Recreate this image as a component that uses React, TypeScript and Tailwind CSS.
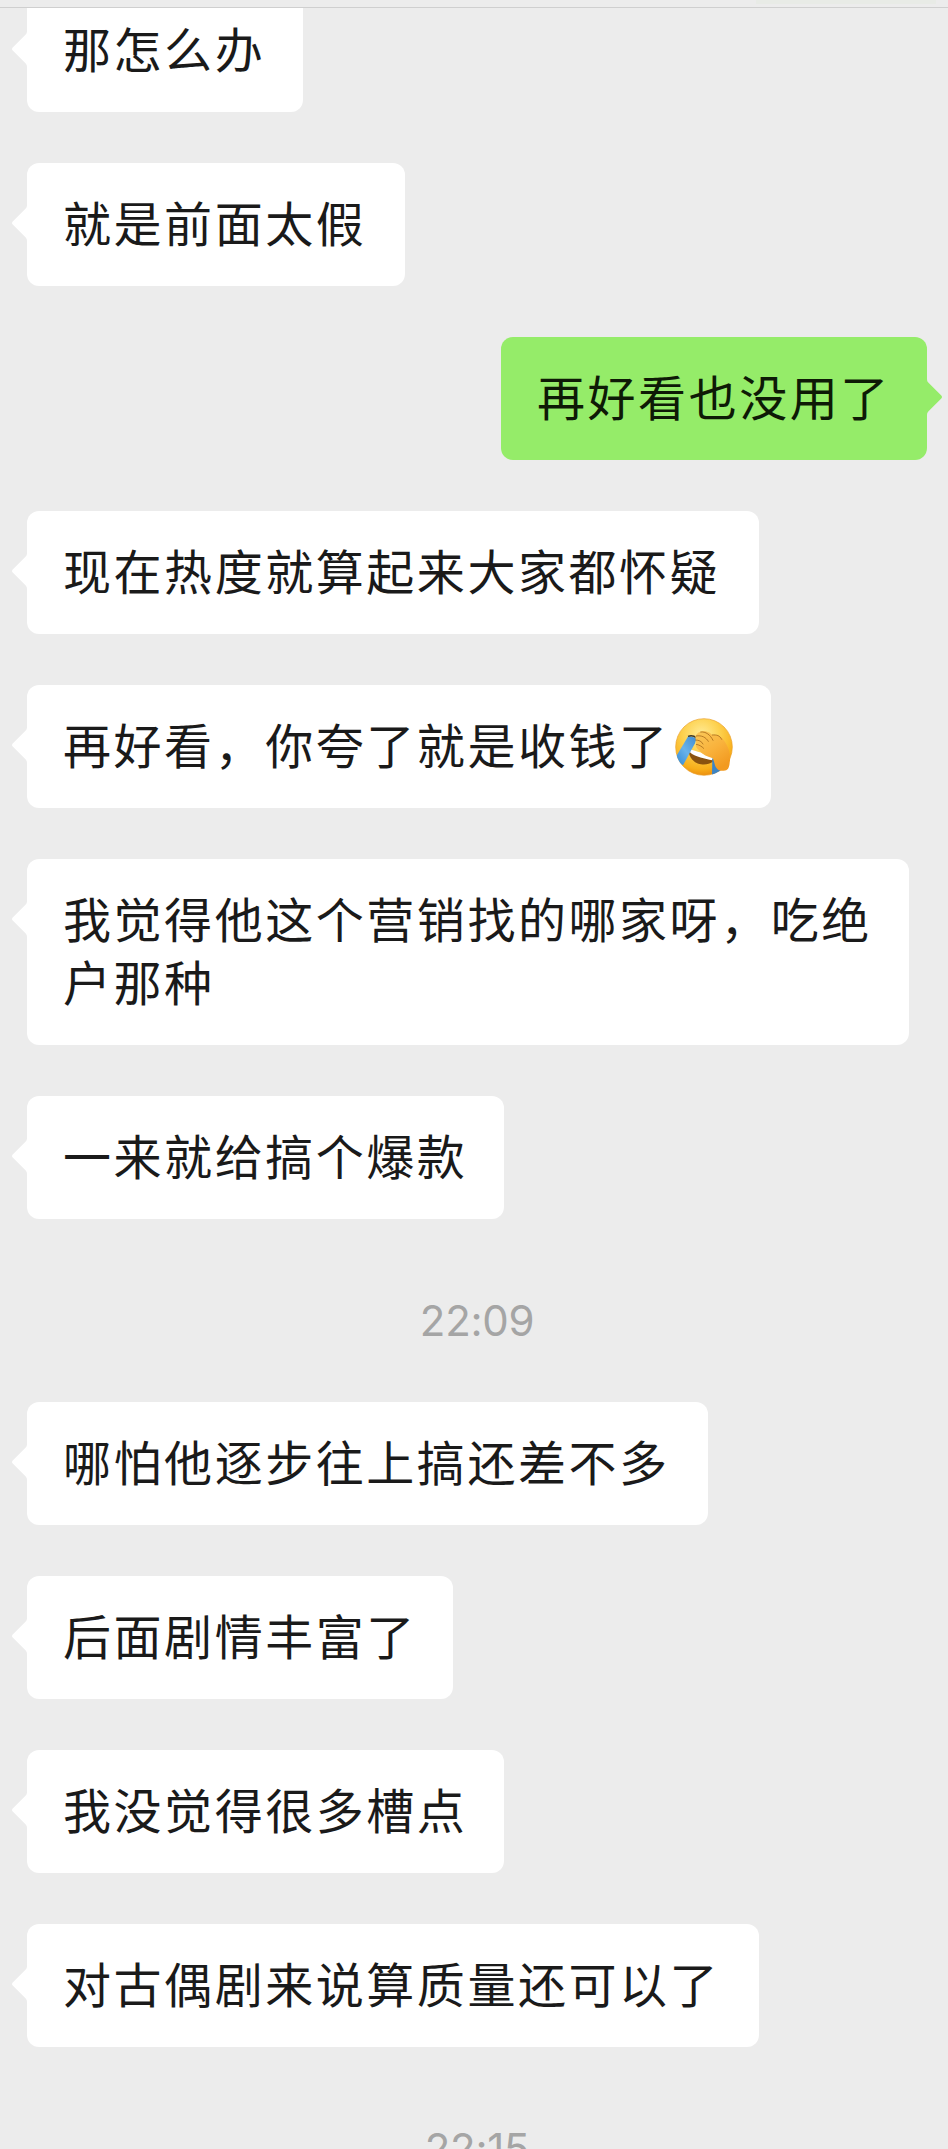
import React from 'react';
import clsx from 'clsx';

interface Message {
  id: number;
  kind: 'in' | 'out' | 'time';
  lines: string[];
  emoji?: boolean;
  width?: string;
}

const MESSAGES: Message[] = [
  { id: 1, kind: 'in', lines: ['那怎么办'], width: 'w-[276px]' },
  { id: 2, kind: 'in', lines: ['就是前面太假'], width: 'w-[378px]' },
  { id: 3, kind: 'out', lines: ['再好看也没用了'], width: 'w-[426px]' },
  { id: 4, kind: 'in', lines: ['现在热度就算起来大家都怀疑'], width: 'w-[732px]' },
  { id: 5, kind: 'in', lines: ['再好看，你夸了就是收钱了'], emoji: true, width: 'w-[744px]' },
  { id: 6, kind: 'in', lines: ['我觉得他这个营销找的哪家呀，吃绝', '户那种'], width: 'w-[882px]' },
  { id: 7, kind: 'in', lines: ['一来就给搞个爆款'], width: 'w-[477px]' },
  { id: 8, kind: 'time', lines: ['22:09'] },
  { id: 9, kind: 'in', lines: ['哪怕他逐步往上搞还差不多'], width: 'w-[681px]' },
  { id: 10, kind: 'in', lines: ['后面剧情丰富了'], width: 'w-[426px]' },
  { id: 11, kind: 'in', lines: ['我没觉得很多槽点'], width: 'w-[477px]' },
  { id: 12, kind: 'in', lines: ['对古偶剧来说算质量还可以了'], width: 'w-[732px]' },
  { id: 13, kind: 'time', lines: ['22:15'] },
];

const FacepalmEmoji = () => (
  <svg className="w-[60px] h-[60px] ml-[4px] shrink-0" viewBox="41 49 180 180">
    <defs>
      <radialGradient id="face" cx="0.45" cy="0.28" r="0.72">
        <stop offset="0" stopColor="#ffeb96" />
        <stop offset="0.45" stopColor="#fdd14e" />
        <stop offset="0.85" stopColor="#f8ae1a" />
        <stop offset="1" stopColor="#ec9010" />
      </radialGradient>
      <linearGradient id="hand" x1="0" y1="0" x2="0.6" y2="1">
        <stop offset="0" stopColor="#fac95a" />
        <stop offset="0.55" stopColor="#f9b23c" />
        <stop offset="1" stopColor="#f29a20" />
      </linearGradient>
      <linearGradient id="tear" x1="1" y1="0" x2="0" y2="1">
        <stop offset="0" stopColor="#3f8bd0" />
        <stop offset="0.5" stopColor="#69b2ea" />
        <stop offset="1" stopColor="#2d84d2" />
      </linearGradient>
      <clipPath id="faceClip">
        <circle cx="131" cy="139" r="86" />
      </clipPath>
    </defs>
    <circle cx="131" cy="139" r="85" fill="url(#face)" stroke="#eaa02c" strokeWidth="2" />
    <g clipPath="url(#faceClip)">
      {/* mouth and teeth */}
      <path d="M85 152c2 20 16 36 37 39 17 2 30-2 37-10l-1-8z" fill="#8a520f" />
      <path d="M88 145c20 8 46 12 70 27l-2 7c-22-5-50-11-66-23z" fill="#fff" />
      {/* tears */}
      <path d="M84 106L109 112L104 128L68 194L42 176Z" fill="url(#tear)" />
      <path d="M156 172L182 200L178 226H155Z" fill="#3d84c4" />
      <path d="M83 107c8-3 19-1 26 5" fill="none" stroke="#3f3928" strokeWidth="4" />
    </g>
    <path
      d="M105 108C108 96 122 89 134 91C144 93 151 98 156 103C166 101 178 105 186 113C200 130 214 158 208 186C207 201 202 210 190 210C174 212 166 203 163 190L158 173C142 169 127 162 116 149C108 142 104 136 108 130Z"
      fill="url(#hand)"
    />
    <path
      d="M106 118C116 118 124 122 128 130M108 106C124 103 137 110 144 122M121 94C136 92 150 102 158 119M156 103C170 102 178 104 184 116M108 131C117 133 124 137 130 143"
      fill="none"
      stroke="#a96c1c"
      strokeWidth="2.500"
      strokeLinecap="round"
    />
  </svg>
);

const Tail = ({ own }: { own: boolean }) => (
  <svg
    className={clsx(
      'absolute top-[42px] w-4 h-9',
      own ? '-right-[15px] text-[#95ec69]' : '-left-[15px] -scale-x-100 text-white'
    )}
    viewBox="0 0 16 36"
  >
    <path d="M0 0h1c0 2 .6 3 2 4.300L14.800 16c1.600 1.500 1.600 2.600 0 4.100L3 31.700C1.600 33 1 34 1 36H0z" fill="currentColor" />
  </svg>
);

const Bubble = ({ message }: { message: Message }) => {
  const own = message.kind === 'out';
  return (
    <div className={clsx('flex mb-[51px]', own ? 'justify-end' : 'justify-start')}>
      <div
        className={clsx(
          'relative shrink-0 rounded-xl py-[30px] pl-9',
          message.width,
          own ? 'bg-[#95ec69] text-[#0e1a06]' : 'bg-white text-[#1a1a1a]'
        )}
      >
        <Tail own={own} />
        {message.lines.map((line) => (
          <div key={line} className="flex items-center h-[63px] whitespace-nowrap">
            <span className="pb-[7px]">{line}</span>
            {message.emoji && <FacepalmEmoji />}
          </div>
        ))}
      </div>
    </div>
  );
};

const TimeLabel = ({ value }: { value: string }) => (
  <div className="-mt-[51px] h-[183px] pt-[76px] text-center text-[42px] leading-[51px] tracking-[-0.3px] text-[#a5a5a5] font-['Inter',sans-serif]">
    {value}
  </div>
);

const App: React.FC = () => {
  return (
    <div className="w-[948px] h-[2149px] flex flex-col overflow-hidden bg-[#ececec] font-['Noto_Sans_CJK_SC',sans-serif] text-[48px] leading-[63px] tracking-[2.55px]">
      <div className="h-2 shrink-0 flex justify-end border-b border-[#cfcfcf] bg-[#ececec] pr-3">
        {/* hint of the green bubble behind the header blur */}
        <div className="w-[180px] h-1 bg-[#e8ebe6]" />
      </div>

      {/* Messages, scrolled partly under the header */}
      <div className="flex-1 overflow-hidden pl-[27px] pr-[21px]">
        <div className="-mt-[19px]">
          {MESSAGES.map((message) =>
            message.kind === 'time' ? (
              <TimeLabel key={message.id} value={message.lines[0]} />
            ) : (
              <Bubble key={message.id} message={message} />
            )
          )}
        </div>
      </div>
    </div>
  );
};

export default App;
